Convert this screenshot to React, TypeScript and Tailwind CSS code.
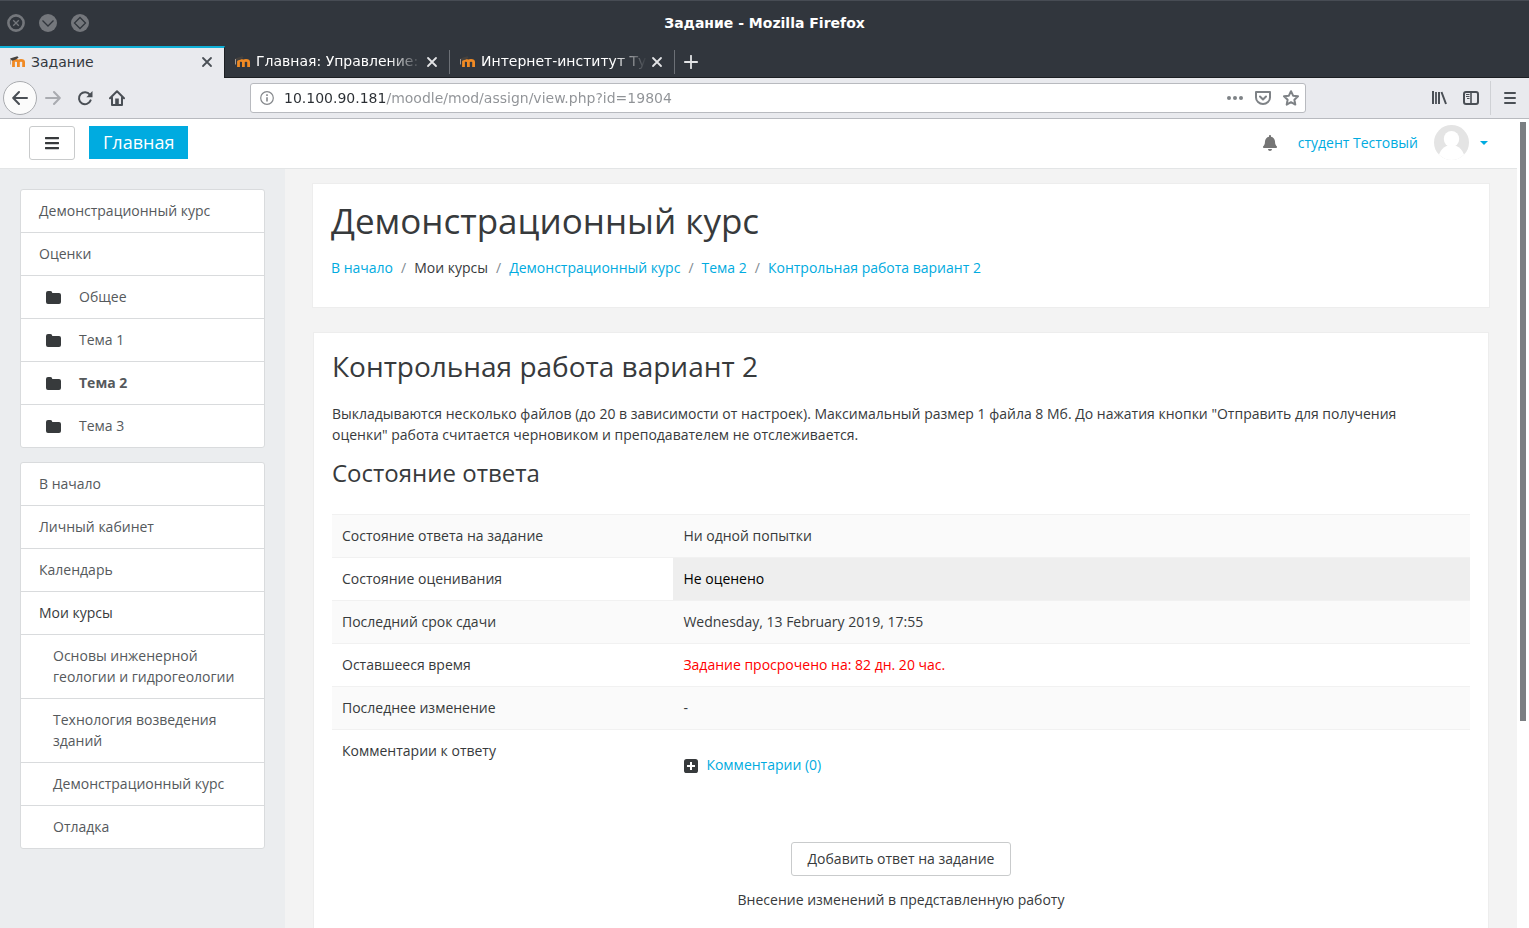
import React from 'react';
import { FaBars, FaBell } from 'react-icons/fa';

const courseLinks = [
  { label: 'Демонстрационный курс' },
  { label: 'Оценки' },
  { label: 'Общее', folder: true },
  { label: 'Тема 1', folder: true },
  { label: 'Тема 2', folder: true, active: true },
  { label: 'Тема 3', folder: true },
];

const siteLinks = [
  { label: 'В начало' },
  { label: 'Личный кабинет' },
  { label: 'Календарь' },
  { label: 'Мои курсы', heading: true },
  { label: 'Основы инженерной геологии и гидрогеологии', nested: true },
  { label: 'Технология возведения зданий', nested: true },
  { label: 'Демонстрационный курс', nested: true },
  { label: 'Отладка', nested: true },
];

const breadcrumbs = [
  { label: 'В начало', link: true },
  { label: 'Мои курсы', link: false },
  { label: 'Демонстрационный курс', link: true },
  { label: 'Тема 2', link: true },
  { label: 'Контрольная работа вариант 2', link: true },
];

const statusRows = [
  { label: 'Состояние ответа на задание', value: 'Ни одной попытки', cell: '' },
  { label: 'Состояние оценивания', value: 'Не оценено', cell: 'bg-[#eeeeee] text-black' },
  { label: 'Последний срок сдачи', value: 'Wednesday, 13 February 2019, 17:55', cell: '' },
  { label: 'Оставшееся время', value: 'Задание просрочено на: 82 дн. 20 час.', cell: 'text-[#ff0000]' },
  { label: 'Последнее изменение', value: '-', cell: '' },
];

type NavLink = { label: string; folder?: boolean; active?: boolean; heading?: boolean; nested?: boolean };

function MoodleIcon() {
  return (
    <svg viewBox="0 0 16 16" className="h-4 w-4 shrink-0" fill="none" aria-hidden="true">
      <path d="M4.500 13V7.500q0-1.200 2.400-1.200t2.500 1.700v5M9.400 8q0-1.700 2.600-1.700T14.600 8v5" stroke="#f08a24" strokeWidth="2.800" />
      <path d="M1 4.600 8.300 2.200 9.600 3.600 7 5.600 3 6.800z" fill="#45413e" />
      <path d="M1.500 5v5.500" stroke="#b3a59a" strokeWidth=".9" />
    </svg>
  );
}

function CloseIcon() {
  return (
    <svg viewBox="0 0 12 12" className="h-3 w-3" stroke="currentColor" strokeWidth="1.8" strokeLinecap="round" aria-hidden="true">
      <path d="M2 2l8 8M10 2l-8 8" />
    </svg>
  );
}

function FolderIcon() {
  return (
    <svg viewBox="0 0 15 13" className="mt-px mr-[18px] ml-[7px] h-[13px] w-[15px] text-[#373a3c]" fill="currentColor" aria-hidden="true">
      <path d="M0 2q0-2 2-2h2.300q2 0 2 2H13q2 0 2 2v7q0 2-2 2H2q-2 0-2-2z" />
    </svg>
  );
}

function TitleBar() {
  return (
    <div className="grid h-[46px] grid-cols-[1fr_auto_1fr] items-center border-t border-[#474c54] bg-[#31363d] px-[7px] pb-[2px]">
      <div className="flex gap-[14px]">
        <button type="button" aria-label="Закрыть">
          <svg viewBox="0 0 18 18" className="h-[18px] w-[18px]" fill="none">
            <circle cx="9" cy="9" r="7.6" stroke="#74777c" strokeWidth="2.6" />
            <path d="M6.2 6.2l5.6 5.6M11.8 6.2l-5.6 5.6" stroke="#74777c" strokeWidth="1.3" />
          </svg>
        </button>
        <button type="button" aria-label="Свернуть">
          <svg viewBox="0 0 18 18" className="h-[18px] w-[18px]" fill="none">
            <circle cx="9" cy="9" r="9" fill="#74777c" />
            <path d="M3.5 6.5L9 12l5.500-5.500" stroke="#31363d" strokeWidth="1.3" />
          </svg>
        </button>
        <button type="button" aria-label="Развернуть">
          <svg viewBox="0 0 18 18" className="h-[18px] w-[18px]" fill="none">
            <circle cx="9" cy="9" r="9" fill="#74777c" />
            <path d="M9 3.500L14.500 9 9 14.500 3.500 9z" stroke="#31363d" strokeWidth="1.3" />
          </svg>
        </button>
      </div>
      <p className="text-[14px] leading-5 font-bold text-white">Задание - Mozilla Firefox</p>
    </div>
  );
}

function BrowserTabs() {
  return (
    <div className="flex h-8 bg-[#31363d] text-[14px] text-white">
      <div className="flex w-[225px] items-center border-t-2 border-r border-t-[#0fb0d8] border-r-[#1c1f23] bg-[#e9eaee] pr-[11px] pb-[2px] pl-[9px] text-[#33373d]">
        <MoodleIcon />
        <span className="ml-1.5 flex-1">Задание</span>
        <button type="button" aria-label="Закрыть вкладку" className="text-[#4a4f55]"><CloseIcon /></button>
      </div>
      {['Главная: Управление:', 'Интернет-институт Ту'].map((title) => (
        <div key={title} className="flex w-[225px] items-center border-b border-[#1c1f23] pl-[9px]">
          <MoodleIcon />
          <span className="ml-1.5 flex-1 whitespace-nowrap [mask-image:linear-gradient(to_right,black_80%,transparent_100%)]">{title}</span>
          <button type="button" aria-label="Закрыть вкладку" className="mr-[11px] ml-1 text-[#e3e4e6]"><CloseIcon /></button>
          <span className="h-6 w-px bg-[#6c7076]" />
        </div>
      ))}
      <div className="flex flex-1 items-center border-b border-[#1c1f23] pl-[9px]">
        <button type="button" aria-label="Новая вкладка">
          <svg viewBox="0 0 14 14" className="h-[14px] w-[14px]" stroke="#e3e4e6" strokeWidth="1.8" strokeLinecap="round">
            <path d="M7 .8v12.4M.8 7h12.4" />
          </svg>
        </button>
      </div>
    </div>
  );
}

function AddressBar() {
  return (
    <div className="flex h-[41px] items-center border-b border-[#b8babf] bg-[#e9eaee] pl-[3px] text-[#4a4f55]">
      <button type="button" aria-label="Назад" className="flex h-[34px] w-[34px] items-center justify-center rounded-full border border-[#a9abaf] bg-[#fbfbfb]">
        <svg viewBox="0 0 16 16" className="h-4 w-4" fill="none" stroke="currentColor" strokeWidth="2" strokeLinecap="round" strokeLinejoin="round">
          <path d="M15 8H1.500M7 2L1.200 8 7 14" />
        </svg>
      </button>
      <button type="button" aria-label="Вперёд" className="ml-2 text-[#a9abb0]">
        <svg viewBox="0 0 16 16" className="h-4 w-4" fill="none" stroke="currentColor" strokeWidth="2" strokeLinecap="round" strokeLinejoin="round">
          <path d="M1 8h13.500M9 2l5.800 6L9 14" />
        </svg>
      </button>
      <button type="button" aria-label="Обновить" className="ml-4">
        <svg viewBox="0 0 16 16" className="h-4 w-4" fill="none">
          <path d="M12.800 4.600A6 6 0 1 0 13.600 10.400" stroke="currentColor" strokeWidth="2" strokeLinecap="round" />
          <path d="M15.500 1v6.200H9.300z" fill="currentColor" />
        </svg>
      </button>
      <button type="button" aria-label="Домой" className="ml-4">
        <svg viewBox="0 0 16 16" className="h-4 w-4" fill="none">
          <path d="M1 8.300L8 1.300l7 7M3 7.500V15h10V7.500" stroke="currentColor" strokeWidth="2" strokeLinecap="round" strokeLinejoin="round" />
          <path d="M6.200 8.500h3.600V15H6.200z" fill="currentColor" />
        </svg>
      </button>
      <div className="ml-[125px] flex h-[30px] w-[1056px] max-w-[70%] items-center rounded-[3px] border border-[#b8babf] bg-white pr-[6px] pl-[9px]">
        <svg viewBox="0 0 14 14" className="h-[14px] w-[14px] shrink-0" fill="none" stroke="#85888c" aria-hidden="true">
          <circle cx="7" cy="7" r="6.300" strokeWidth="1.200" />
          <path d="M7 6.200V10.500M7 3.300v1.600" strokeWidth="1.600" />
        </svg>
        <input
          type="text"
          aria-label="Адрес"
          defaultValue="10.100.90.181/moodle/mod/assign/view.php?id=19804"
          className="ml-[10px] min-w-0 flex-1 bg-[linear-gradient(to_right,#2a2e33_102px,#8f9296_102px)] bg-clip-text text-[14px] text-transparent outline-none"
        />
        <div className="flex items-center gap-3 text-[#7e8286]">
          <button type="button" aria-label="Действия">
            <svg viewBox="0 0 16 16" className="h-4 w-4" fill="currentColor">
              <circle cx="2" cy="8" r="2" />
              <circle cx="8" cy="8" r="2" />
              <circle cx="14" cy="8" r="2" />
            </svg>
          </button>
          <button type="button" aria-label="Pocket">
            <svg viewBox="0 0 16 16" className="h-4 w-4" fill="none" stroke="currentColor" strokeWidth="2" strokeLinecap="round" strokeLinejoin="round">
              <path d="M1 2h14v5.500a7 6.500 0 0 1-14 0z" />
              <path d="M5 6.500l3 3 3-3" />
            </svg>
          </button>
          <button type="button" aria-label="Закладка">
            <svg viewBox="0 0 16 16" className="h-4 w-4" fill="none" stroke="currentColor" strokeWidth="2" strokeLinejoin="round">
              <path d="M8 1.200l2.100 4.500 4.900.6-3.600 3.400.9 4.900L8 12.200l-4.300 2.400.9-4.900L1 6.300l4.900-.6z" />
            </svg>
          </button>
        </div>
      </div>
      <div className="ml-auto flex items-center">
        <button type="button" aria-label="Библиотека">
          <svg viewBox="0 0 16 16" className="h-4 w-4" fill="none" stroke="currentColor" strokeWidth="2">
            <path d="M2 1v13M8 2v12M10.500 2l4.500 12" />
            <path d="M5 2v12" strokeWidth="1.800" />
          </svg>
        </button>
        <button type="button" aria-label="Боковая панель" className="mr-[11px] ml-4">
          <svg viewBox="0 0 16 16" className="h-4 w-4" fill="none" stroke="currentColor">
            <rect x="1" y="2" width="14" height="12" rx="2" strokeWidth="2" />
            <path d="M8 2v12" strokeWidth="1.600" />
            <path d="M3 4.500h3.500M3 6.500h3.500M4 8.500h2.500" strokeWidth="1" />
          </svg>
        </button>
        <span className="h-[34px] w-px bg-[#cfd1d5]" />
        <button type="button" aria-label="Меню" className="mr-[13px] ml-[13px]">
          <svg viewBox="0 0 12 16" className="h-4 w-3" stroke="currentColor" strokeWidth="2" strokeLinecap="round">
            <path d="M1 3h10M1 8h10M1 13h10" />
          </svg>
        </button>
      </div>
    </div>
  );
}

function SiteHeader() {
  return (
    <header className="flex h-[50px] items-center border-b border-[#e3e5e6] bg-white pr-7 pb-[2px] pl-[29px]">
      <button type="button" aria-label="Боковая панель" className="flex h-[34px] w-[46px] items-center justify-center rounded-[3px] border border-[#c9cbcc] text-[#373a3c]">
        <FaBars className="h-4 w-4" />
      </button>
      <a href="#" className="ml-[14px] flex h-[33px] items-center bg-[#00abe0] px-[14px] text-[18px] text-white">Главная</a>
      <div className="ml-auto flex items-center text-[#00abe0]">
        <button type="button" aria-label="Уведомления" className="text-[#757575]"><FaBell className="h-4 w-4" /></button>
        <a href="#" className="mr-4 ml-5">студент Тестовый</a>
        <svg viewBox="0 0 35 35" className="h-[35px] w-[35px]" aria-hidden="true">
          <clipPath id="avatar"><circle cx="17.500" cy="17.500" r="17.500" /></clipPath>
          <g clipPath="url(#avatar)">
            <rect width="35" height="35" fill="#e4e4e4" />
            <ellipse cx="17.500" cy="14" rx="7.700" ry="8" fill="#fff" />
            <ellipse cx="17.500" cy="34" rx="13" ry="14" fill="#fff" />
          </g>
        </svg>
        <button type="button" aria-label="Меню пользователя" className="mr-px ml-[11px]">
          <svg viewBox="0 0 8 4" className="h-1 w-2" fill="currentColor"><path d="M0 0h8L4 4z" /></svg>
        </button>
      </div>
    </header>
  );
}

function NavList({ label, links }: { label: string; links: NavLink[] }) {
  return (
    <nav aria-label={label}>
      <ul className="divide-y divide-[#d9dbdd] rounded-[3px] border border-[#d9dbdd] bg-white text-[#55595c]">
        {links.map((link) => (
          <li key={link.label}>
            <a href="#" className={`flex items-center pt-[10px] pr-[18px] pb-[11px] ${link.nested ? 'pl-8' : 'pl-[18px]'} ${link.active ? 'font-bold' : ''} ${link.heading ? 'text-[#373a3c]' : ''}`}>
              {link.folder && <FolderIcon />}
              {link.label}
            </a>
          </li>
        ))}
      </ul>
    </nav>
  );
}

function CourseHeader() {
  return (
    <section className="border border-[#ededed] bg-white px-[18px] pt-[18px] pb-[29px]">
      <h1 className="text-[35px] leading-[38px]">Демонстрационный курс</h1>
      <ol className="mt-[17px] flex flex-wrap">
        {breadcrumbs.map((item, i) => (
          <li key={item.label} className="flex">
            {i > 0 && <span className="px-2 text-[#818a91]">/</span>}
            {item.link ? <a href="#" className="text-[#00abe0]">{item.label}</a> : <span>{item.label}</span>}
          </li>
        ))}
      </ol>
    </section>
  );
}

function Assignment() {
  return (
    <section className="mx-px flex-1 border border-b-0 border-[#ededed] bg-white px-[18px] pt-[17px] pb-2">
      <h2 className="text-[28px] leading-8">Контрольная работа вариант 2</h2>
      <p className="mt-[21px] pr-6">
        Выкладываются несколько файлов (до 20 в зависимости от настроек). Максимальный размер 1 файла 8 Мб. До нажатия кнопки "Отправить для получения оценки" работа считается черновиком и преподавателем не отслеживается.
      </p>
      <h3 className="mt-[14px] text-[24px] leading-7">Состояние ответа</h3>
      <table className="mt-[27px] w-full table-fixed border-collapse text-left">
        <tbody>
          {statusRows.map((row) => (
            <tr key={row.label} className="h-[43px] border-t border-[#f1f1f1] align-top odd:bg-[#fafafa]">
              <th scope="row" className="w-[30%] px-[10px] pt-[10px] font-normal">{row.label}</th>
              <td className={`px-[10px] pt-[10px] ${row.cell}`}>{row.value}</td>
            </tr>
          ))}
          <tr className="border-t border-[#f1f1f1] align-top">
            <th scope="row" className="px-[10px] pt-[10px] font-normal">Комментарии к ответу</th>
            <td className="px-[10px] pt-6 pb-[53px]">
              <a href="#" className="flex items-center text-[#00abe0]">
                <svg viewBox="0 0 14 14" className="mt-[2px] mr-2 ml-px h-[14px] w-[14px] text-[#373a3c]" aria-hidden="true">
                  <rect width="14" height="14" rx="2.600" fill="currentColor" />
                  <path d="M7 3v8M3 7h8" stroke="#fff" strokeWidth="2" />
                </svg>
                Комментарии (0)
              </a>
            </td>
          </tr>
        </tbody>
      </table>
      <div className="mt-[14px] flex flex-col items-center">
        <button type="button" className="h-[34px] rounded-[3px] border border-[#c9cbcc] px-4 pb-px">Добавить ответ на задание</button>
        <p className="mt-[13px]">Внесение изменений в представленную работу</p>
      </div>
    </section>
  );
}

export default function App() {
  return (
    <div className="flex min-h-screen flex-col">
      <div className="font-['DejaVu_Sans',sans-serif]">
        <TitleBar />
        <BrowserTabs />
        <AddressBar />
      </div>
      <div className="flex flex-1 bg-white">
        <div className="flex min-w-0 flex-1 flex-col font-['Open_Sans',sans-serif] text-[14px] leading-[21px] text-[#373a3c]">
          <SiteHeader />
          <div className="flex flex-1">
            <aside className="w-[285px] shrink-0 space-y-[14px] bg-[#ebedef] p-5">
              <NavList label="Курс" links={courseLinks} />
              <NavList label="Сайт" links={siteLinks} />
            </aside>
            <main className="flex min-w-0 flex-1 flex-col gap-6 bg-[#f3f3f3] px-[27px] pt-[14px]">
              <CourseHeader />
              <Assignment />
            </main>
          </div>
        </div>
        <div className="w-3 px-[3px] pt-[3px]">
          <div className="h-[599px] bg-[#7b7f82]" />
        </div>
      </div>
    </div>
  );
}
